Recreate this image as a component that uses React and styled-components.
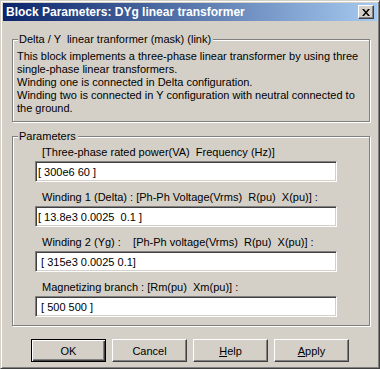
import React from "react";
import styled, { createGlobalStyle } from "styled-components";

const GlobalStyle = createGlobalStyle`
  html, body {
    margin: 0;
    padding: 0;
    background: #d4d0c8;
  }
  body {
    font-family: "Liberation Sans", Arial, sans-serif;
    font-size: 11px;
    color: #000;
  }
`;

const fields = [
  { label: "[Three-phase rated power(VA)  Frequency (Hz)]", value: "[ 300e6 60 ]" },
  { label: "Winding 1 (Delta) : [Ph-Ph Voltage(Vrms)  R(pu)  X(pu)] :", value: "[ 13.8e3 0.0025  0.1 ]" },
  { label: "Winding 2 (Yg) :    [Ph-Ph voltage(Vrms)  R(pu)  X(pu)] :", value: " [ 315e3 0.0025 0.1]" },
  { label: "Magnetizing branch : [Rm(pu)  Xm(pu)] :", value: " [ 500 500 ]" },
];

const App = () => {
  return (
    <>
      <GlobalStyle />
      <Window>
        <TitleBar>
          <Title>Block Parameters: DYg linear transformer</Title>
          <CloseButton>
            <svg width="8" height="7" viewBox="0 0 8 7">
              <path d="M0 0h2l2 2.5L6 0h2L5 3.5 8 7H6L4 4.5 2 7H0l3-3.5z" fill="#000" />
            </svg>
          </CloseButton>
        </TitleBar>
        <Body>
          <Group $top={9}>
            <Legend>Delta / Y  linear tranformer (mask) (link)</Legend>
            <Description>
              This block implements a three-phase linear transformer by using three
              <br />
              single-phase linear transformers.
              <br />
              Winding one is connected in Delta configuration.
              <br />
              Winding two is connected in Y configuration with neutral connected to
              <br />
              the ground.
            </Description>
          </Group>
          <Group $top={8}>
            <Legend>Parameters</Legend>
            <Fields>
              {fields.map((f) => (
                <Field key={f.label}>
                  <Label>{f.label}</Label>
                  <TextBox readOnly defaultValue={f.value} />
                </Field>
              ))}
            </Fields>
          </Group>
          <Buttons>
            <Button $default>OK</Button>
            <Button>Cancel</Button>
            <Button>
              <u>H</u>elp
            </Button>
            <Button>
              <u>A</u>pply
            </Button>
          </Buttons>
        </Body>
      </Window>
    </>
  );
};

const Window = styled.div`
  box-sizing: border-box;
  width: 380px;
  height: 369px;
  background: #d4d0c8;
  border: 1px solid;
  border-color: #d4d0c8 #404040 #404040 #d4d0c8;
  box-shadow: inset 1px 1px 0 #fff, inset -1px -1px 0 #808080;
  padding: 2px;
  display: flex;
  flex-direction: column;
`;

const TitleBar = styled.div`
  height: 18px;
  display: flex;
  align-items: center;
  justify-content: space-between;
  padding: 0 3px 0 3px;
  background: linear-gradient(to right, #0a246a, #a6caf0);
`;

const Title = styled.span`
  color: #fff;
  font-weight: bold;
  font-size: 12px;
  font-family: "Liberation Sans", Arial, sans-serif;
  white-space: pre;
`;

const CloseButton = styled.div`
  box-sizing: border-box;
  width: 16px;
  height: 14px;
  background: #d4d0c8;
  border: 1px solid;
  border-color: #fff #404040 #404040 #fff;
  box-shadow: inset -1px -1px 0 #808080;
  display: flex;
  align-items: center;
  justify-content: center;
`;

const Body = styled.div`
  flex: 1;
  display: flex;
  flex-direction: column;
  padding: 3px 7px 0 9px;
`;

const Group = styled.fieldset`
  margin: ${(p) => p.$top}px 0 0 0;
  padding: 0;
  border: 1px solid #808080;
  box-shadow: inset 1px 1px 0 #fff, 1px 1px 0 #fff;
  min-width: 0;
`;

const Legend = styled.legend`
  margin-left: 5px;
  padding: 0 2px 0 1px;
  line-height: 13px;
  background: #d4d0c8;
  white-space: pre;
  font-size: 11px;
`;

const Description = styled.p`
  margin: 4px 0 6px 4px;
  line-height: 13px;
`;

const Fields = styled.div`
  display: flex;
  flex-direction: column;
  gap: 9px;
  padding: 3px 0 8px 22px;
`;

const Field = styled.div`
  display: flex;
  flex-direction: column;
  gap: 2px;
`;

const Label = styled.span`
  white-space: pre;
  line-height: 13px;
  padding-left: 7px;
`;

const TextBox = styled.input`
  box-sizing: border-box;
  width: 302px;
  height: 21px;
  margin: 0;
  padding: 0 2px;
  background: #fff;
  font-family: "Liberation Sans", Arial, sans-serif;
  font-size: 11px;
  color: #000;
  outline: none;
  border: 1px solid;
  border-color: #808080 #fff #fff #808080;
  box-shadow: inset 1px 1px 0 #404040, inset -1px -1px 0 #d4d0c8;
`;

const Buttons = styled.div`
  display: flex;
  justify-content: center;
  gap: 6px;
  margin-top: 13px;
  padding-right: 2px;
`;

const Button = styled.button`
  box-sizing: border-box;
  width: 75px;
  height: 23px;
  margin: 0;
  padding: 0;
  background: #d4d0c8;
  font-family: "Liberation Sans", Arial, sans-serif;
  font-size: 11px;
  color: #000;
  border: 1px solid;
  border-color: ${(p) => (p.$default ? "#000" : "#fff #404040 #404040 #fff")};
  box-shadow: ${(p) =>
    p.$default
      ? "inset 1px 1px 0 #fff, inset -1px -1px 0 #404040, inset -2px -2px 0 #808080"
      : "inset -1px -1px 0 #808080"};
`;

export default App;
